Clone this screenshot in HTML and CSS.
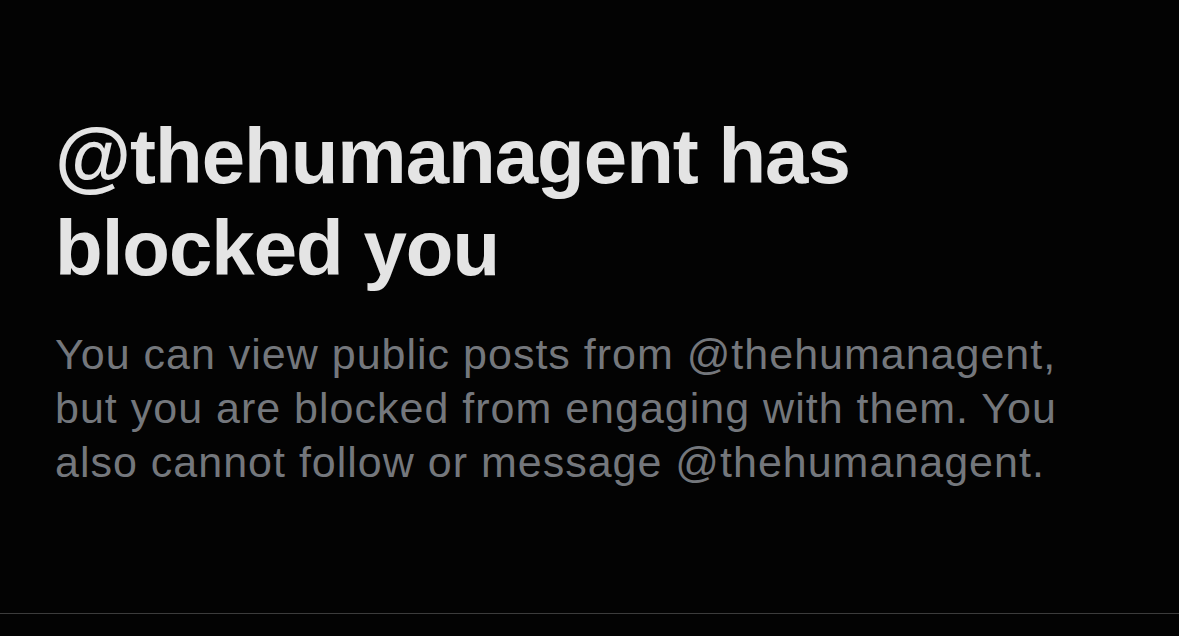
FILE: index.html
```html
<!DOCTYPE html>
<html>
<head>
<meta charset="utf-8">
<link rel="stylesheet" href="styles.css">
</head>
<body>
<main class="page">
  <section class="notice">
    <h1 class="title">@thehumanagent has blocked you</h1>
    <p class="desc">You can view public posts from @thehumanagent, but you are blocked from engaging with them. You also cannot follow or message @thehumanagent.</p>
  </section>
  <div class="divider"></div>
</main>
</body>
</html>
```
FILE: styles.css
```css
html, body {
  margin: 0;
  padding: 0;
  background: #030303;
  height: 100%;
}
.page {
  height: 636px;
  display: flex;
  flex-direction: column;
  overflow: hidden;
}
.notice {
  flex: 1;
  padding: 110px 0 0 55px;
}
.title {
  margin: 0;
  width: 840px;
  font-family: "Liberation Sans", Arial, sans-serif;
  font-weight: 700;
  font-size: 78px;
  line-height: 92px;
  color: #e4e4e4;
  letter-spacing: -1px;
}
.desc {
  margin: 33px 0 0 0;
  width: 1030px;
  font-family: "Liberation Sans", Arial, sans-serif;
  font-size: 43px;
  line-height: 54px;
  letter-spacing: 1px;
  color: #74777c;
}
.divider {
  height: 1px;
  background: #3c3c3c;
  margin-bottom: 22px;
}
```
